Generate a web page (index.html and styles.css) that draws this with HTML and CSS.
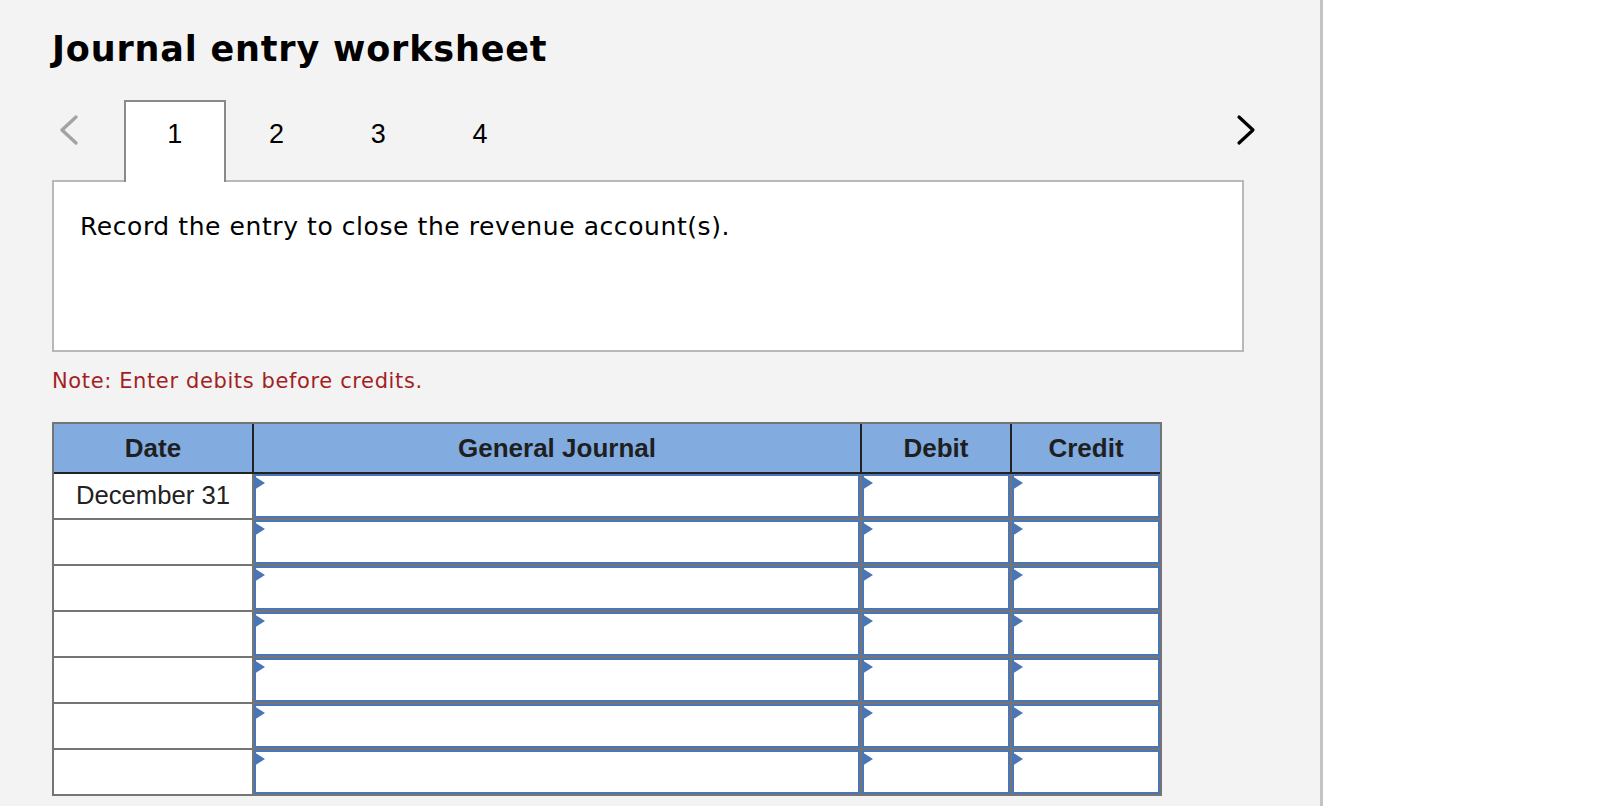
FILE: index.html
```html
<!DOCTYPE html>
<html lang="en">
<head>
<meta charset="utf-8">
<title>Journal entry worksheet</title>
<link rel="stylesheet" href="styles.css">
</head>
<body>
<main class="sheet">
  <h1 class="title">Journal entry worksheet</h1>
  <div class="tabbar">
    <svg class="arrow" width="22" height="32" viewBox="0 0 22 32"><path d="M19 3 L5 16 L19 29" fill="none" stroke="#a3a3a3" stroke-width="3.4" stroke-linecap="round" stroke-linejoin="round"/></svg>
    <div class="tabs">
      <div class="tab active">1</div>
      <div class="tab">2</div>
      <div class="tab">3</div>
      <div class="tab">4</div>
    </div>
    <svg class="arrow next" width="22" height="32" viewBox="0 0 22 32"><path d="M4 3 L18 16 L4 29" fill="none" stroke="#000" stroke-width="3.2" stroke-linecap="round" stroke-linejoin="round"/></svg>
  </div>
  <div class="panel">Record the entry to close the revenue account(s).</div>
  <p class="note">Note: Enter debits before credits.</p>
  <div class="journal">
    <div class="head">Date</div><div class="head">General Journal</div><div class="head">Debit</div><div class="head">Credit</div>

    <div class="date">December 31</div><div class="field"></div><div class="field"></div><div class="field"></div>
    <div class="date"></div><div class="field"></div><div class="field"></div><div class="field"></div>
    <div class="date"></div><div class="field"></div><div class="field"></div><div class="field"></div>
    <div class="date"></div><div class="field"></div><div class="field"></div><div class="field"></div>
    <div class="date"></div><div class="field"></div><div class="field"></div><div class="field"></div>
    <div class="date"></div><div class="field"></div><div class="field"></div><div class="field"></div>
    <div class="date"></div><div class="field"></div><div class="field"></div><div class="field"></div>
  </div>
</main>
</body>
</html>
```
FILE: styles.css
```css
* { box-sizing: border-box; }
html, body { margin: 0; height: 100%; overflow: hidden; background: #fff; }
.sheet {
  width: 1323px;
  height: 806px;
  background: #f3f3f3;
  border-right: 3px solid #c4c4c4;
  padding: 29px 0 0 52px;
  font-family: "Liberation Sans", Arial, sans-serif;
  color: #000;
}
.title {
  margin: 0;
  font: bold 35px/40px "DejaVu Sans", Verdana, sans-serif;
  letter-spacing: 0.82px;
}
.tabbar {
  margin-top: 31px;
  display: flex;
  align-items: flex-start;
  width: 1192px;
  height: 81px;
  position: relative;
  z-index: 1;
}
.arrow { margin: 14px 0 0 5px; flex: none; }
.arrow.next { margin: 14px -13px 0 auto; }
.tabs { display: flex; margin-left: 45px; }
.tab {
  width: 101.75px;
  height: 82px;
  padding-top: 17px;
  text-align: center;
  font-size: 27px;
  line-height: 30px;
  border: 2px solid transparent;
  border-bottom: 0;
}
.tab.active { background: #fff; border-color: #8a8a8a; }
.panel {
  width: 1192px;
  height: 172px;
  margin-top: -1px;
  padding: 30px 26px;
  background: #fff;
  border: 2px solid #b8b8b8;
  font: 25px/30px "DejaVu Sans", Verdana, sans-serif;
  letter-spacing: 0.57px;
}
.note {
  margin: 15px 0 0;
  color: #a31f1f;
  font: 21px/28px "DejaVu Sans", Verdana, sans-serif;
  letter-spacing: 0.62px;
}
.journal {
  margin-top: 27px;
  width: 1110px;
  height: 374px;
  display: grid;
  grid-template-columns: 198px 608px 150px 150px;
  grid-template-rows: 50px repeat(7, 46px);
  background: #757575;
  border: solid #757575;
  border-width: 2px 2px 0;
}
.head {
  background: #82abe0;
  border-left: 2px solid #222;
  border-bottom: 2px solid #222;
  text-align: center;
  font-weight: bold;
  font-size: 26px;
  line-height: 48px;
  color: #1f1f1f;
}
.head:first-child { border-left: 0; }
.date {
  background: #fff;
  border-bottom: 2px solid #757575;
  text-align: center;
  font-size: 25.7px;
  line-height: 43px;
  color: #222;
}
.field {
  position: relative;
  background: #fff;
  border: 2px solid #4a76b8;
  margin: 0 0 2px 2px;
}
.field::before {
  content: "";
  position: absolute;
  left: -2px;
  top: 0;
  border-left: 11px solid #4a76b8;
  border-top: 7px solid transparent;
  border-bottom: 7px solid transparent;
}
```
